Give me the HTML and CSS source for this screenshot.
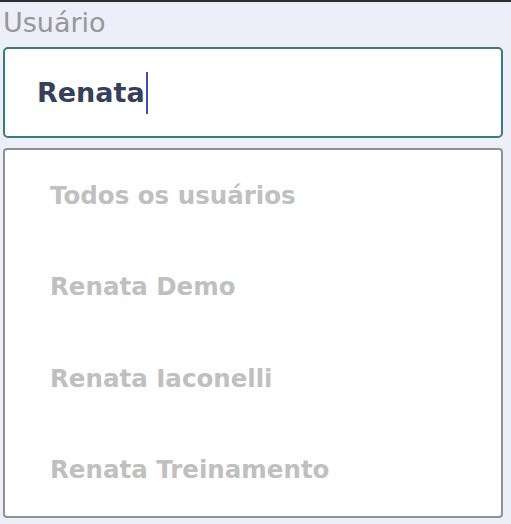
FILE: index.html
```html
<!DOCTYPE html>
<html lang="pt-BR">
<head>
    <meta charset="UTF-8">
    <meta name="viewport" content="width=device-width, initial-scale=1.0">
    <title>Usuário</title>
    <link rel="stylesheet" href="styles.css">
</head>
<body>
    <div class="field">
        <label class="field-label">Usuário</label>
        <div class="search-box">
            <span class="search-text">Renata</span><span class="caret"></span>
        </div>
        <ul class="options">
            <li class="option">Todos os usuários</li>
            <li class="option">Renata Demo</li>
            <li class="option">Renata Iaconelli</li>
            <li class="option">Renata Treinamento</li>
        </ul>
    </div>
</body>
</html>
```

FILE: styles.css
```css
body {
    margin: 0;
    background-color: #eceef8;
    font-family: "DejaVu Sans", sans-serif;
    border-top: 2px solid #2e2e30;
}
.field {
    padding: 0 8px 0 3px;
}
.field-label {
    display: block;
    height: 45px;
    padding-top: 5px;
    box-sizing: border-box;
    font-size: 27px;
    line-height: 32px;
    font-weight: 400;
    color: #979797;
}
.search-box {
    height: 91px;
    box-sizing: border-box;
    display: flex;
    align-items: center;
    padding-left: 32px;
    background-color: white;
    border: 2px solid #3d7b7b;
    border-radius: 5px;
}
.search-text {
    font-size: 27px;
    font-weight: 700;
    color: #393e5d;
}
.caret {
    display: inline-block;
    width: 2px;
    height: 42px;
    margin-left: 1px;
    background-color: #3f4fb8;
}
.options {
    list-style: none;
    margin: 10px 0 0;
    padding: 0;
    height: 370px;
    box-sizing: border-box;
    background-color: white;
    border: 2px solid #8e9196;
    border-radius: 4px;
}
.option {
    height: 91.5px;
    display: flex;
    align-items: center;
    padding-left: 45px;
    padding-bottom: 1px;
    box-sizing: border-box;
    font-size: 24.5px;
    font-weight: 700;
    color: #c0c0c0;
}
```
